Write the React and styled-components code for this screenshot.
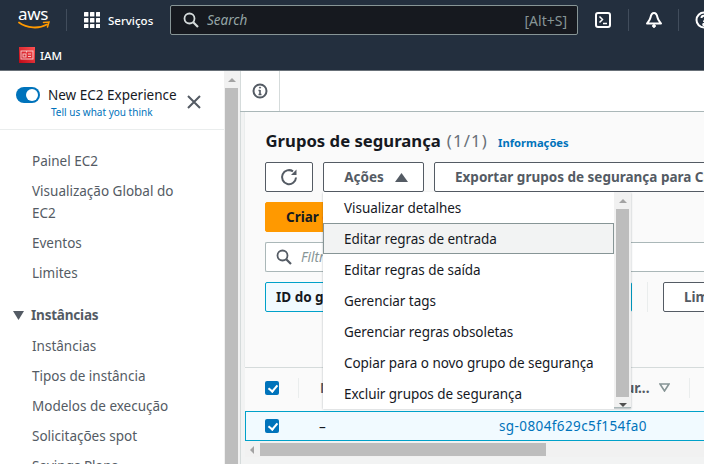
import React from 'react'
import styled, { createGlobalStyle } from 'styled-components'

const menuItems = [
    'Visualizar detalhes',
    'Editar regras de entrada',
    'Editar regras de saída',
    'Gerenciar tags',
    'Gerenciar regras obsoletas',
    'Copiar para o novo grupo de segurança',
    'Excluir grupos de segurança',
]

const App = () => {
    return (
        <Page>
            <GlobalStyle />
            <Header>
                <TopBar>
                    <Logo>
                        <LogoText>aws</LogoText>
                        <svg width="32" height="10" viewBox="0 0 32 10">
                            <path d="M1 1.5C9 7.5 21 8 29 3.5" fill="none" stroke="#ff9900" strokeWidth="1.8" strokeLinecap="round" />
                            <path d="M25.5 1.5 L31 1 L29.5 6" fill="none" stroke="#ff9900" strokeWidth="1.5" strokeLinecap="round" />
                        </svg>
                    </Logo>
                    <HeaderDivider />
                    <ServicesButton>
                        <svg width="16" height="16" viewBox="0 0 16 16" fill="#fff">
                            {[0, 6, 12].map(y => [0, 6, 12].map(x => (
                                <rect key={`${x}-${y}`} x={x} y={y} width="4.4" height="4.4" rx="0.5" />
                            )))}
                        </svg>
                        Serviços
                    </ServicesButton>
                    <SearchBox>
                        <svg width="16" height="16" viewBox="0 0 16 16" fill="none" stroke="#d5dbdb" strokeWidth="1.8">
                            <circle cx="6.5" cy="6.5" r="5" />
                            <path d="M10.2 10.2 L15 15" strokeWidth="2.2" />
                        </svg>
                        <SearchPlaceholder>Search</SearchPlaceholder>
                        <SearchHint>[Alt+S]</SearchHint>
                    </SearchBox>
                    <ShellIcon>
                        <svg width="18" height="18" viewBox="0 0 18 18" fill="none" stroke="#fff" strokeWidth="2">
                            <rect x="2" y="2" width="14" height="14" rx="2" />
                            <path d="M5.5 5.5 L8.5 8.5 L5.5 11.5 M9 12.5 H13" strokeWidth="1.5" />
                        </svg>
                    </ShellIcon>
                    <HeaderIconDivider />
                    <HeaderIcon>
                        <svg width="18" height="18" viewBox="0 0 18 18" fill="none" stroke="#fff" strokeWidth="2">
                            <path d="M9 2 C11 2 12 4 12.5 6.5 C13 9 15 11 16 12.5 H2 C3 11 5 9 5.5 6.5 C6 4 7 2 9 2 Z" strokeLinejoin="round" />
                            <circle cx="9" cy="15" r="1.4" fill="#fff" strokeWidth="1" />
                        </svg>
                    </HeaderIcon>
                    <HeaderIconDivider />
                    <HeaderIcon>
                        <svg width="18" height="18" viewBox="0 0 18 18" fill="none" stroke="#fff" strokeWidth="2">
                            <circle cx="9" cy="9" r="7.5" />
                            <path d="M6.5 7 C6.5 4 11.5 4 11.5 7 C11.5 9 9 9 9 11" />
                            <circle cx="9" cy="13.5" r="0.8" fill="#fff" />
                        </svg>
                    </HeaderIcon>
                </TopBar>
                <ServiceBar>
                    <IamBadge>
                        <svg width="14" height="10" viewBox="0 0 14 10" fill="none" stroke="#f8c6c6" strokeWidth="1">
                            <rect x="1" y="1" width="12" height="8" />
                            <rect x="3" y="4" width="3" height="3" />
                            <path d="M8 4 H11 M8 6.5 H11 M6.5 1 V2.5" />
                        </svg>
                    </IamBadge>
                    IAM
                </ServiceBar>
            </Header>
            <Body>
                <Sidebar>
                    <Experience>
                        <ExperienceRow>
                            <Toggle />
                            <ExperienceTitle>New EC2 Experience</ExperienceTitle>
                            <CloseIcon width="14" height="14" viewBox="0 0 14 14" fill="none" stroke="#545b64" strokeWidth="2">
                                <path d="M1 1 L13 13 M13 1 L1 13" />
                            </CloseIcon>
                        </ExperienceRow>
                        <FeedbackLink>Tell us what you think</FeedbackLink>
                    </Experience>
                    <Nav>
                        <NavLink>Painel EC2</NavLink>
                        <NavLink>Visualização Global do EC2</NavLink>
                        <NavLink>Eventos</NavLink>
                        <NavLink>Limites</NavLink>
                        <NavSection>
                            <svg width="11" height="9" viewBox="0 0 11 9" fill="#545b64">
                                <path d="M0 0 H11 L5.5 9 Z" />
                            </svg>
                            Instâncias
                        </NavSection>
                        <NavLink>Instâncias</NavLink>
                        <NavLink>Tipos de instância</NavLink>
                        <NavLink>Modelos de execução</NavLink>
                        <NavLink>Solicitações spot</NavLink>
                        <NavLink>Savings Plans</NavLink>
                    </Nav>
                </Sidebar>
                <SideScrollbar>
                    <ArrowUp />
                    <SideThumb />
                </SideScrollbar>
                <Main>
                    <InfoBar>
                        <InfoCell>
                            <svg width="16" height="16" viewBox="0 0 16 16" fill="none" stroke="#545b64" strokeWidth="2">
                                <circle cx="8" cy="8" r="6.5" />
                                <path d="M8 7 V12 M6.5 11.5 H9.5 M6.5 7.5 H8" strokeWidth="1.6" />
                                <circle cx="8" cy="4.6" r="0.6" fill="#545b64" strokeWidth="1" />
                            </svg>
                        </InfoCell>
                    </InfoBar>
                    <Panel>
                        <Content>
                            <Heading>
                                <Title>Grupos de segurança</Title>
                                <Count>(1/1)</Count>
                                <InfoLink>Informações</InfoLink>
                            </Heading>
                            <Toolbar>
                                <IconButton>
                                    <svg width="18" height="18" viewBox="0 0 18 18" fill="none" stroke="#545b64" strokeWidth="2">
                                        <path d="M16 9.5 A7 7 0 1 1 13 3.4" />
                                        <path d="M11 7 H16.5 V1.5 Z" fill="#545b64" stroke="none" />
                                    </svg>
                                </IconButton>
                                <ActionsButton>
                                    Ações
                                    <svg width="13" height="9" viewBox="0 0 13 9" fill="#545b64">
                                        <path d="M6.5 0 L13 9 H0 Z" />
                                    </svg>
                                </ActionsButton>
                                <ExportButton>Exportar grupos de segurança para CSV</ExportButton>
                            </Toolbar>
                            <CreateButton>Criar grupo de segurança</CreateButton>
                            <FilterBox>
                                <svg width="16" height="16" viewBox="0 0 16 16" fill="none" stroke="#545b64" strokeWidth="1.8">
                                    <circle cx="6.5" cy="6.5" r="5" />
                                    <path d="M10.2 10.2 L15 15" strokeWidth="2.2" />
                                </svg>
                                <FilterPlaceholder>Filtrar grupos de segurança</FilterPlaceholder>
                            </FilterBox>
                            <TokenRow>
                                <Token>ID do grupo de segurança</Token>
                                <TokenDivider />
                                <ClearButton>Limpar filtros</ClearButton>
                            </TokenRow>
                        </Content>
                        <Table>
                            <HeadRow>
                                <CheckCell><CheckMark /></CheckCell>
                                <HeadCell>Name</HeadCell>
                                <HeadCell>
                                    ID do grupo de segur...
                                    <svg width="11" height="9" viewBox="0 0 11 9" fill="none" stroke="#879596" strokeWidth="1.6">
                                        <path d="M1 1 H10 L5.5 8 Z" />
                                    </svg>
                                </HeadCell>
                            </HeadRow>
                            <SelectedRow>
                                <BodyCheckCell><CheckMark /></BodyCheckCell>
                                <BodyCell>–</BodyCell>
                                <IdCell>sg-0804f629c5f154fa0</IdCell>
                            </SelectedRow>
                        </Table>
                        <TableScrollbar>
                            <ArrowLeft />
                            <TableThumb />
                        </TableScrollbar>
                    </Panel>
                    <Menu>
                        <MenuList>
                            {menuItems.map(item => (
                                <MenuItem key={item} active={item === 'Editar regras de entrada'}>{item}</MenuItem>
                            ))}
                        </MenuList>
                        <MenuScrollbar>
                            <ArrowUp />
                            <MenuThumb />
                            <ArrowDown />
                        </MenuScrollbar>
                    </Menu>
                </Main>
            </Body>
        </Page>
    )
}

const GlobalStyle = createGlobalStyle`
    html, body {
        margin: 0;
        padding: 0;
        background: #fff;
    }

    * {
        box-sizing: border-box;
    }
`

const Page = styled.div`
    width: 704px;
    height: 464px;
    overflow: hidden;
    display: flex;
    flex-direction: column;
    font-family: "Noto Sans", "Open Sans", sans-serif;
    font-size: 13.5px;
    color: #16191f;
`

const Header = styled.header`
    flex: none;
    height: 71px;
    background: #232f3e;
    border-bottom: 1px solid #687078;
`

const TopBar = styled.div`
    display: flex;
    align-items: center;
    height: 40px;
    padding-left: 18px;
    white-space: nowrap;
`

const Logo = styled.div`
    flex: none;
    display: flex;
    flex-direction: column;
    width: 32px;
    margin-top: -2px;
`

const LogoText = styled.span`
    font-size: 17px;
    line-height: 14px;
    color: #fff;
    letter-spacing: -0.3px;
`

const HeaderDivider = styled.div`
    flex: none;
    width: 1px;
    height: 22px;
    margin: 0 17px 0 16px;
    background: #414d5c;
`

const ServicesButton = styled.div`
    flex: none;
    display: flex;
    align-items: center;
    gap: 8px;
    width: 86px;
    color: #fff;
    font-size: 11.5px;
    font-weight: 500;
`

const SearchBox = styled.div`
    display: flex;
    align-items: center;
    flex: none;
    width: 408px;
    height: 30px;
    padding: 0 10px 0 12px;
    background: #16191f;
    border: 1px solid #879596;
    border-radius: 2px;
`

const SearchPlaceholder = styled.span`
    margin-left: 8px;
    color: #95a5a6;
    font-style: italic;
`

const SearchHint = styled.span`
    margin-left: auto;
    color: #879596;
    font-size: 14px;
`

const HeaderIcon = styled.div`
    display: flex;
    flex: none;
    width: 18px;
    height: 18px;
`

const ShellIcon = styled(HeaderIcon)`
    margin-left: 16px;
`

const HeaderIconDivider = styled.div`
    flex: none;
    width: 1px;
    height: 22px;
    margin: 0 16px 0 15.5px;
    background: #414d5c;
`

const ServiceBar = styled.div`
    display: flex;
    align-items: center;
    gap: 5px;
    height: 30px;
    padding-left: 19px;
    color: #fff;
    font-size: 11.5px;
    font-weight: 500;
`

const IamBadge = styled.span`
    display: flex;
    align-items: center;
    justify-content: center;
    width: 16px;
    height: 16px;
    background: linear-gradient(45deg, #bd0816, #ff5252);
`

const Body = styled.div`
    flex: 1;
    display: flex;
    min-height: 0;
`

const Sidebar = styled.aside`
    flex: none;
    width: 224px;
    overflow: hidden;
`

const Experience = styled.div`
    height: 59px;
    padding: 14px 0 0 16px;
    border-bottom: 1px solid #eaeded;
`

const ExperienceRow = styled.div`
    display: flex;
    align-items: center;
    height: 20px;
`

const Toggle = styled.span`
    flex: none;
    width: 24px;
    height: 16px;
    border-radius: 8px;
    background: #0073bb;
    position: relative;

    &::after {
        content: '';
        position: absolute;
        top: 2px;
        right: 2px;
        width: 12px;
        height: 12px;
        border-radius: 50%;
        background: #fff;
    }
`

const ExperienceTitle = styled.span`
    margin-left: 8px;
    white-space: nowrap;
`

const CloseIcon = styled.svg`
    flex: none;
    margin: 14px 0 0 10px;
`

const FeedbackLink = styled.div`
    margin: 0 0 0 35px;
    color: #0073bb;
    font-size: 10px;
    line-height: 14px;
`

const Nav = styled.nav`
    padding-top: 16px;
    color: #545b64;
`

const NavLink = styled.div`
    padding: 4px 24px 4px 32px;
    line-height: 22px;
`

const NavSection = styled.div`
    display: flex;
    align-items: center;
    gap: 7px;
    margin-top: 16px;
    margin-bottom: 5px;
    padding: 0 0 0 13px;
    height: 22px;
    font-weight: 700;
    letter-spacing: -0.2px;
`

const ScrollTrack = styled.div`
    flex: none;
    display: flex;
    flex-direction: column;
    align-items: center;
    background: #f1f1f1;
`

const SideScrollbar = styled(ScrollTrack)`
    width: 16px;
    padding: 7px 2px 0 1px;
`

const ArrowUp = styled.span`
    flex: none;
    width: 0;
    height: 0;
    margin-bottom: 6px;
    border-left: 4px solid transparent;
    border-right: 4px solid transparent;
    border-bottom: 4px solid #a3a3a3;
`

const ArrowDown = styled.span`
    flex: none;
    width: 0;
    height: 0;
    margin-top: 6px;
    border-left: 4px solid transparent;
    border-right: 4px solid transparent;
    border-top: 4px solid #505050;
`

const ArrowLeft = styled.span`
    flex: none;
    width: 0;
    height: 0;
    margin: 0 6px 0 5px;
    border-top: 4px solid transparent;
    border-bottom: 4px solid transparent;
    border-right: 4px solid #a3a3a3;
`

const SideThumb = styled.div`
    flex: 1;
    width: 13px;
    background: #bdbdbd;
`

const Main = styled.main`
    position: relative;
    flex: 1;
    min-width: 0;
    display: flex;
    flex-direction: column;
    overflow: hidden;
    background: #fff;
`

const InfoBar = styled.div`
    flex: none;
    height: 41px;
    background: #fff;
    border-bottom: 1px solid #aab7b8;
`

const InfoCell = styled.div`
    display: flex;
    align-items: center;
    justify-content: center;
    width: 40px;
    height: 40px;
    padding-right: 1px;
    border-left: 1px solid #d5dbdb;
    border-right: 1px solid #d5dbdb;
`

const Panel = styled.div`
    flex: 1;
    display: flex;
    flex-direction: column;
    min-height: 0;
    padding-left: 4px;
    background: #f2f3f3;
    border-left: 1px solid #d5dbdb;
`

const Content = styled.div`
    flex: none;
    display: flex;
    flex-direction: column;
    gap: 10px;
    height: 255px;
    padding: 17px 0 0 20px;
    background: #fafafa;
    border-left: 1px solid #eaeded;
    margin-left: -1px;
`

const Heading = styled.div`
    display: flex;
    align-items: baseline;
    height: 23px;
    padding-left: 0.5px;
    white-space: nowrap;
`

const Title = styled.h1`
    margin: 0;
    font-size: 16.7px;
    font-weight: 700;
    line-height: 20px;
`

const Count = styled.span`
    margin-left: 6px;
    color: #687078;
    font-size: 16.7px;
    letter-spacing: 1.2px;
`

const InfoLink = styled.a`
    margin-left: 10px;
    color: #0073bb;
    font-size: 11.2px;
    font-weight: 700;
`

const Toolbar = styled.div`
    display: flex;
    gap: 10px;
`

const Button = styled.button`
    flex: none;
    display: flex;
    align-items: center;
    justify-content: center;
    height: 30px;
    padding: 0 20px;
    background: #fff;
    border: 1px solid #545b64;
    border-radius: 2px;
    color: #545b64;
    font-family: inherit;
    font-size: 13.5px;
    font-weight: 700;
    white-space: nowrap;
`

const IconButton = styled(Button)`
    width: 48px;
    padding: 0;
`

const ActionsButton = styled(Button)`
    width: 101px;
    gap: 11px;
    padding: 0 0 0 5px;
`

const ExportButton = styled(Button)`
    justify-content: flex-start;
`

const CreateButton = styled(Button)`
    align-self: flex-start;
    justify-content: flex-start;
    background: #ff9900;
    border-color: #ff9900;
    color: #16191f;
`

const FilterBox = styled.div`
    display: flex;
    align-items: center;
    gap: 9px;
    height: 30px;
    padding-left: 10px;
    background: #fff;
    border: 1px solid #aab7b8;
    border-right: none;
    border-radius: 2px 0 0 2px;
`

const FilterPlaceholder = styled.span`
    color: #879596;
    font-style: italic;
`

const TokenRow = styled.div`
    display: flex;
    align-items: center;
    height: 30px;
`

const Token = styled.div`
    flex: none;
    display: flex;
    align-items: center;
    width: 367px;
    height: 30px;
    padding-left: 10px;
    background: #f1faff;
    border: 1px solid #00a1c9;
    border-radius: 2px;
    font-weight: 700;
`

const TokenDivider = styled.div`
    flex: none;
    width: 1px;
    height: 30px;
    margin: 0 15px;
    background: #eaeded;
`

const ClearButton = styled(Button)``

const Table = styled.div`
    flex: none;
    width: 500px;
`

const TableRow = styled.div`
    display: grid;
    grid-template-columns: 54px 200px 191px 1fr;
    align-items: center;
`

const HeadRow = styled(TableRow)`
    height: 44px;
    padding-bottom: 4px;
    background: #fafafa;
    border-top: 1px solid #d5dbdb;
`

const SelectedRow = styled(TableRow)`
    height: 30px;
    padding-bottom: 1px;
    background: #f1faff;
    border: 1px solid #00a1c9;
`

const CheckCell = styled.div`
    display: flex;
    align-items: center;
    height: 20px;
    padding-left: 20px;
    border-right: 1px solid #eaeded;
`

const BodyCheckCell = styled(CheckCell)`
    padding-left: 19px;
    border-right: none;
`

const CheckMark = styled.span`
    position: relative;
    display: block;
    width: 14px;
    height: 14px;
    border-radius: 2px;
    background: #0073bb;

    &::after {
        content: '';
        position: absolute;
        top: 2px;
        left: 4.5px;
        width: 4px;
        height: 7px;
        border: solid #fff;
        border-width: 0 2px 2px 0;
        transform: rotate(40deg);
    }
`

const HeadCell = styled.div`
    display: flex;
    align-items: center;
    justify-content: space-between;
    height: 20px;
    padding-left: 21px;
    padding-right: 19px;
    border-right: 1px solid #eaeded;
    color: #545b64;
    font-weight: 700;
    white-space: nowrap;

    &:nth-child(2) {
        border-right: none;
    }

    &:nth-child(3) {
        padding-left: 0;
    }
`

const BodyCell = styled.div`
    padding: 2px 0 0 19px;
    white-space: nowrap;
`

const IdCell = styled.a`
    margin-left: -1px;
    color: #0073bb;
    letter-spacing: 0.4px;
    white-space: nowrap;
`

const TableScrollbar = styled(ScrollTrack)`
    flex-direction: row;
    height: 15px;
    margin-top: 1px;
    width: 459px;
    background: #f1f1f1;
`

const TableThumb = styled.div`
    width: 286px;
    height: 13px;
    background: #bdbdbd;
`

const Menu = styled.div`
    position: absolute;
    top: 121px;
    left: 83px;
    display: flex;
    width: 308px;
    height: 216px;
    background: #fff;
    border-bottom: 1px solid #aab7b8;
    box-shadow: 0 1px 2px rgba(0, 28, 36, 0.3);
`

const MenuList = styled.ul`
    flex: 1;
    margin: 0;
    padding: 0;
    list-style: none;
    letter-spacing: -0.05px;
`

const MenuItem = styled.li.withConfig({ shouldForwardProp: prop => prop !== 'active' })`
    display: flex;
    align-items: center;
    height: 31px;
    padding-left: ${props => props.active ? '20px' : '21px'};
    background: ${props => props.active ? '#f2f3f3' : '#fff'};
    border: ${props => props.active ? '1px solid #879596' : 'none'};
    color: #16191f;
    white-space: nowrap;
`

const MenuScrollbar = styled(ScrollTrack)`
    width: 17px;
    padding-top: 7px;
`

const MenuThumb = styled.div`
    flex: 1;
    width: 13px;
    background: #bdbdbd;
`

export default App
